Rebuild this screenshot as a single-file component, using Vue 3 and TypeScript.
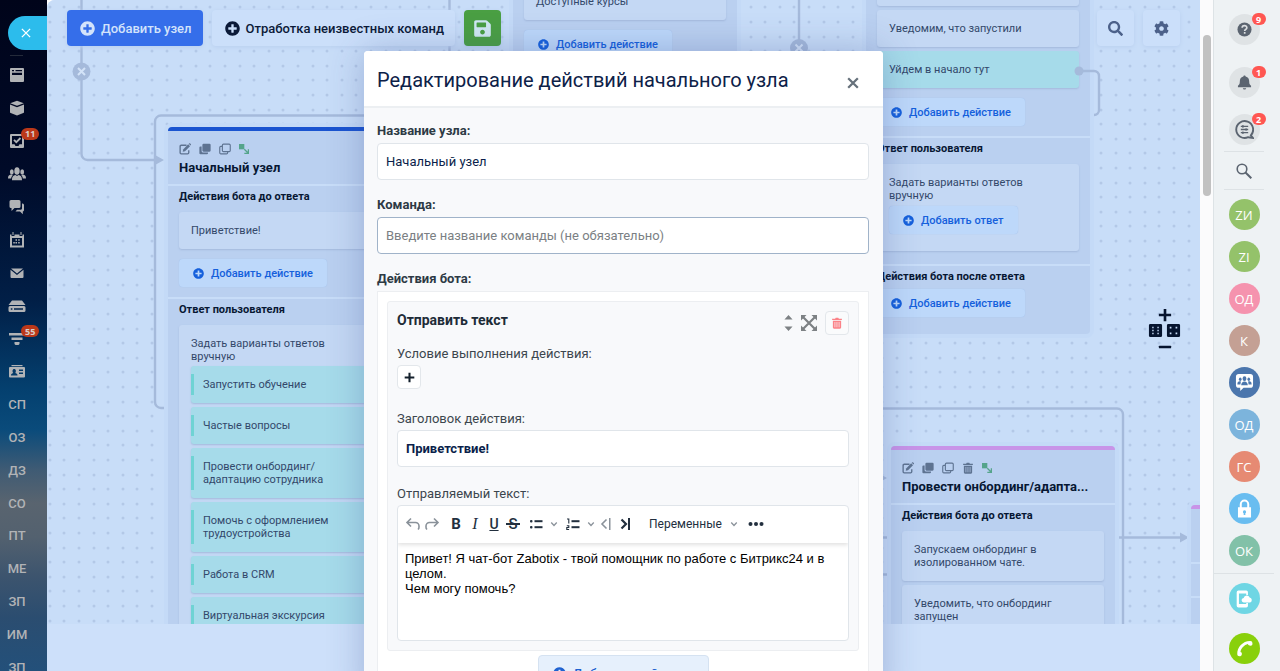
<script setup lang="ts">
import { h, ref } from 'vue'

interface Glyph { box: string; body: string }

const glyphs: Record<string, Glyph> = {
  plusCircle: { box: '0 0 512 512', body: '<path d="M256 8C119 8 8 119 8 256s111 248 248 248 248-111 248-248S393 8 256 8zm144 276c0 6.6-5.4 12-12 12h-92v92c0 6.6-5.4 12-12 12h-56c-6.600 0-12-5.400-12-12v-92h-92c-6.600 0-12-5.400-12-12v-56c0-6.600 5.400-12 12-12h92v-92c0-6.600 5.400-12 12-12h56c6.600 0 12 5.400 12 12v92h92c6.600 0 12 5.400 12 12v56z"/>' },
  search: { box: '0 0 512 512', body: '<path d="M505 442.7L405.3 343c-4.500-4.500-10.600-7-17-7H372c27.600-35.300 44-79.700 44-128C416 93.100 322.900 0 208 0S0 93.100 0 208s93.100 208 208 208c48.300 0 92.700-16.400 128-44v16.300c0 6.400 2.500 12.500 7 17l99.700 99.700c9.400 9.400 24.600 9.400 33.900 0l28.300-28.300c9.400-9.400 9.400-24.600.1-34zM208 336c-70.700 0-128-57.200-128-128 0-70.700 57.200-128 128-128 70.700 0 128 57.200 128 128 0 70.700-57.200 128-128 128z"/>' },
  gear: { box: '0 0 512 512', body: '<path d="M487.4 315.7l-42.600-24.600c4.300-23.200 4.300-47 0-70.200l42.600-24.600c4.900-2.800 7.100-8.600 5.500-14-11.100-35.600-30-67.800-54.700-94.600-3.800-4.100-10-5.100-14.800-2.300L380.800 110c-17.900-15.400-38.500-27.300-60.800-35.100V25.800c0-5.600-3.900-10.500-9.400-11.700-36.700-8.200-74.300-7.800-109.200 0-5.500 1.200-9.400 6.100-9.400 11.700V75c-22.200 7.900-42.800 19.800-60.800 35.100L88.700 85.500c-4.900-2.800-11-1.900-14.800 2.300-24.700 26.700-43.600 58.900-54.700 94.600-1.700 5.400.6 11.200 5.500 14L67.300 221c-4.300 23.200-4.300 47 0 70.200l-42.600 24.600c-4.900 2.800-7.100 8.600-5.500 14 11.100 35.600 30 67.800 54.700 94.600 3.800 4.100 10 5.100 14.800 2.300l42.600-24.600c17.900 15.400 38.500 27.300 60.800 35.100v49.200c0 5.600 3.900 10.500 9.400 11.700 36.700 8.200 74.300 7.800 109.200 0 5.500-1.200 9.400-6.100 9.400-11.700v-49.200c22.200-7.900 42.800-19.800 60.800-35.100l42.600 24.600c4.900 2.800 11 1.900 14.800-2.300 24.700-26.700 43.600-58.900 54.700-94.600 1.500-5.500-.7-11.300-5.600-14.100zM256 336c-44.100 0-80-35.900-80-80s35.900-80 80-80 80 35.900 80 80-35.900 80-80 80z"/>' },
  save: { box: '0 0 448 512', body: '<path d="M433.900 129.900l-83.900-83.900A48 48 0 0 0 316.100 32H48C21.500 32 0 53.500 0 80v352c0 26.500 21.500 48 48 48h352c26.500 0 48-21.500 48-48V163.900a48 48 0 0 0-14.100-34zM224 416c-35.300 0-64-28.700-64-64s28.700-64 64-64 64 28.700 64 64-28.700 64-64 64zm96-304.500V212c0 6.600-5.400 12-12 12H76c-6.600 0-12-5.400-12-12V108c0-6.600 5.400-12 12-12h228.500c3.200 0 6.200 1.300 8.500 3.500l3.500 3.500a12 12 0 0 1 3.500 8.500z"/>' },
  edit: { box: '0 0 16 16', body: '<path d="M10 3H3a1.500 1.500 0 0 0-1.500 1.500v8.500A1.500 1.500 0 0 0 3 14.500h8.500A1.500 1.500 0 0 0 13 13V9.500" fill="none" stroke="currentColor" stroke-width="1.800"/><path d="M5 11.500l.5-3L12.200 1.800 14.700 4.300 8 11z"/><path d="M13 1l.8-.6c.4-.3.8-.2 1.100.1l.8.8c.4.4.4.8.1 1.200l-.6.8z"/>' },
  copySolid: { box: '0 0 16 16', body: '<rect x="4.500" y="1" width="11" height="10.500" rx="1.500"/><path d="M3.500 4.500H2A1.500 1.500 0 0 0 .5 6v7.500A1.500 1.500 0 0 0 2 15h8.500a1.500 1.500 0 0 0 1.500-1.500v-1H5a1.500 1.500 0 0 1-1.500-1.500z"/>' },
  copy: { box: '0 0 16 16', body: '<g fill="none" stroke="currentColor" stroke-width="1.500"><rect x="4.500" y="1.500" width="10.500" height="10" rx="1.500"/><path d="M4 4.500H2.500A1.500 1.500 0 0 0 1 6v7A1.500 1.500 0 0 0 2.500 14.500H10a1.500 1.500 0 0 0 1.500-1.500v-1"/></g>' },
  trash: { box: '0 0 16 16', body: '<path fill-rule="evenodd" d="M1.500 2.200H5.500L6.300 1h3.400l.8 1.200h4v1.800h-13zM2.500 5h11v9a1.500 1.500 0 0 1-1.500 1.500H4A1.500 1.500 0 0 1 2.500 14zM4.800 6.500v7h.9v-7zM7.500 6.500v7h.9v-7zM10.300 6.500v7h.9v-7z"/>' },
  link: { box: '0 0 16 16', body: '<rect x="0" y="0" width="8.500" height="8.500"/><path d="M8.500 8.500l6 6M15 8.500V15H8.500" fill="none" stroke="currentColor" stroke-width="2"/>' },
  crossThin: { box: '0 0 16 16', body: '<path d="M2.500 2.500l11 11M13.500 2.500l-11 11" fill="none" stroke="currentColor" stroke-width="1.800"/>' },
  crossBold: { box: '0 0 16 16', body: '<path d="M2.500 2.500l11 11M13.500 2.500l-11 11" fill="none" stroke="currentColor" stroke-width="2.600"/>' },
  plus: { box: '0 0 16 16', body: '<path d="M6.500 1h3v5.500H15v3H9.500V15h-3V9.500H1v-3h5.500z"/>' },
  minus: { box: '0 0 16 16', body: '<rect x="1" y="6.500" width="14" height="3" rx=".6"/>' },
  diceSix: { box: '0 0 16 16', body: '<path fill-rule="evenodd" d="M2.500 1h11A1.500 1.500 0 0 1 15 2.500v11a1.500 1.500 0 0 1-1.500 1.500h-11A1.500 1.500 0 0 1 1 13.500v-11A1.500 1.500 0 0 1 2.500 1zM4.500 4v1.500H6V4zM10 4v1.500h1.500V4zM4.500 7.200v1.500H6V7.200zM10 7.200v1.500h1.500V7.200zM4.500 10.500V12H6v-1.500zM10 10.500V12h1.500v-1.500z"/>' },
  diceFour: { box: '0 0 16 16', body: '<path fill-rule="evenodd" d="M2.500 1h11A1.500 1.500 0 0 1 15 2.500v11a1.500 1.500 0 0 1-1.500 1.500h-11A1.500 1.500 0 0 1 1 13.500v-11A1.500 1.500 0 0 1 2.500 1zM4 4v1.800h1.800V4zM10.200 4v1.800H12V4zM4 10.200V12h1.800v-1.800zM10.200 10.200V12H12v-1.800z"/>' },
  sort: { box: '0 0 10 20', body: '<path d="M.5 6L5 1l4.500 5zM.5 14L5 19l4.500-5z"/>' },
  expand: { box: '0 0 16 16', body: '<path d="M0 0h5.500L0 5.500zM16 0h-5.500L16 5.500zM0 16h5.500L0 10.500zM16 16h-5.500L16 10.500z"/><path d="M2 2l12 12M14 2L2 14" stroke="currentColor" stroke-width="2.200"/>' },
  undo: { box: '0 0 16 16', body: '<path d="M6 2.500L2 6.500l4 4M2.500 6.500h8a3.500 3.500 0 0 1 3.500 3.500v1a3 3 0 0 1-1 2.500" fill="none" stroke="currentColor" stroke-width="1.600"/>' },
  redo: { box: '0 0 16 16', body: '<path d="M10 2.500l4 4-4 4M13.500 6.500h-8A3.500 3.500 0 0 0 2 10v1a3 3 0 0 0 1 2.500" fill="none" stroke="currentColor" stroke-width="1.600"/>' },
  bullets: { box: '0 0 16 16', body: '<rect x="2" y="4" width="2.500" height="2.500" rx="1"/><rect x="2" y="10" width="2.500" height="2.500" rx="1"/><rect x="6.500" y="4.200" width="8" height="2"/><rect x="6.500" y="10.200" width="8" height="2"/>' },
  numbers: { box: '0 0 16 16', body: '<path d="M2 3h1.800v4.500M1.800 9.800h2v1.700h-2v2h2.300" fill="none" stroke="currentColor" stroke-width="1.100"/><rect x="6.500" y="4.200" width="8" height="2"/><rect x="6.500" y="10.200" width="8" height="2"/>' },
  chevron: { box: '0 0 16 16', body: '<path d="M2.500 5l5.500 6 5.500-6" fill="none" stroke="currentColor" stroke-width="2.600"/>' },
  before: { box: '0 0 16 16', body: '<path d="M8.500 3.500L4 8l4.500 4.500" fill="none" stroke="currentColor" stroke-width="1.600"/><rect x="11" y="2" width="1.500" height="12"/>' },
  after: { box: '0 0 16 16', body: '<path d="M4.500 3.500L9 8l-4.500 4.500" fill="none" stroke="currentColor" stroke-width="2.200"/><rect x="11" y="2" width="2" height="12"/>' },
  dots: { box: '0 0 16 16', body: '<circle cx="2.500" cy="8" r="2"/><circle cx="8" cy="8" r="2"/><circle cx="13.500" cy="8" r="2"/>' },
  feed: { box: '0 0 16 16', body: '<path fill-rule="evenodd" d="M2 1h12a1 1 0 0 1 1 1v12a1 1 0 0 1-1 1H2a1 1 0 0 1-1-1V2a1 1 0 0 1 1-1zM3 3v1.300h2V3zM6.500 3v1.300H13V3zM3 5.800V8h10V5.800z"/>' },
  box: { box: '0 0 16 16', body: '<path d="M8 .8L14.800 3.300 8 5.800 1.200 3.300zM1 4.600L8 7.200l7-2.600v7.600a1 1 0 0 1-.7.900L8 15.400l-6.300-2.300a1 1 0 0 1-.7-.9z"/>' },
  task: { box: '0 0 16 16', body: '<path fill-rule="evenodd" d="M2 1h12a1 1 0 0 1 1 1v12a1 1 0 0 1-1 1H2a1 1 0 0 1-1-1V2a1 1 0 0 1 1-1zM3 3v8.200h2.500L6.500 13h3l1-1.800H13V3z"/><path d="M5 6.800l2.300 2.400L11.500 5" fill="none" stroke="currentColor" stroke-width="1.800"/>' },
  people: { box: '0 0 18 16', body: '<ellipse cx="9" cy="5" rx="2.700" ry="3.800"/><path d="M4 14.200c0-3.500 1-4.500 3.500-5.200L9 10l1.500-1C13 9.700 14 10.700 14 14.200z"/><ellipse cx="3.800" cy="6" rx="1.900" ry="2.700"/><ellipse cx="14.200" cy="6" rx="1.900" ry="2.700"/><path d="M0 12.500C0 10 .8 9.300 3 8.600l1.700.6C3.500 10.500 3.200 11.500 3.200 12.500zM18 12.500c0-2.500-.8-3.200-3-3.900l-1.700.6c1.200 1.300 1.500 2.300 1.500 3.300z"/>' },
  chat: { box: '0 0 16 16', body: '<path d="M2 1h8a1.500 1.500 0 0 1 1.500 1.500v5A1.500 1.500 0 0 1 10 9H5.500l-3 3V9H2A1.500 1.500 0 0 1 .5 7.500v-5A1.500 1.500 0 0 1 2 1z"/><path d="M13 4.500h.5A1.500 1.500 0 0 1 15 6v5a1.500 1.500 0 0 1-1.200 1.500v2.700L11 12.500H6.500L8 10.800h3.500A1.500 1.500 0 0 0 13 9.500z"/>' },
  calendar: { box: '0 0 16 16', body: '<path fill-rule="evenodd" d="M1 2.500h1.500V4h3V2.500h5V4h3V2.500H15v13H1zM3 6v7.500h10V6z"/><path d="M3.500 0h1v3h-1zM11.500 0h1v3h-1zM6.500 7.200h1.500v1.500H6.500zM9.200 7.200h1.500v1.500H9.200zM4.300 10h1.500v1.500H4.300zM6.500 10H8v1.500H6.500zM9.200 10h1.500v1.500H9.200z"/>' },
  mail: { box: '0 0 16 16', body: '<path d="M2 3.500h12L8 8.500zM1.500 4.700L8 10l6.500-5.300V12a1 1 0 0 1-1 1h-11a1 1 0 0 1-1-1z"/>' },
  drive: { box: '0 0 18 16', body: '<path fill-rule="evenodd" d="M4 2.500h10L17.500 7H.5zM2 8h14a1.500 1.500 0 0 1 1.500 1.500v3A1.500 1.500 0 0 1 16 14H2a1.500 1.500 0 0 1-1.500-1.500v-3A1.500 1.500 0 0 1 2 8zM2.800 10.200v1.600h1.600v-1.600zM6 10.200v1.600h9v-1.600z"/>' },
  filter: { box: '0 0 16 16', body: '<rect y="2" width="16" height="2.500"/><rect x="2.500" y="6.500" width="11" height="2.500"/><path d="M5.500 11h5v2L9.500 14h-3l-1-1z"/>' },
  card: { box: '0 0 18 16', body: '<path fill-rule="evenodd" d="M2 4h14a1 1 0 0 1 1 1v8.500a1 1 0 0 1-1 1H2a1 1 0 0 1-1-1V5a1 1 0 0 1 1-1zM11 6.500V8h4V6.500zM11 9.500V11h4V9.500zM3 12.500h6.500C9.500 11 9 10.700 7.300 10 8.200 8.800 8.200 6 6.200 6S4.200 8.800 5.200 10c-1.700.7-2.200 1-2.200 2.500z"/><path d="M3.500 2h11v1.200h-11z"/>' },
  help: { box: '0 0 16 16', body: '<circle cx="8" cy="8" r="7.500"/><path d="M5.500 6.200C5.500 3 10.500 3 10.500 6c0 1.800-2.300 1.900-2.300 3.600M8.200 10.700v1.800" fill="none" stroke="#dcdfe2" stroke-width="1.800"/>' },
  bell: { box: '0 0 16 16', body: '<path d="M8 .5c.8 0 1.200.5 1.200 1.200C12 2.300 13 4.500 13 7c0 3 .8 3.500 2 4.500V13H1v-1.500c1.200-1 2-1.500 2-4.500 0-2.500 1-4.700 3.800-5.300C6.800 1 7.200.5 8 .5zM6.200 14h3.600a1.800 1.500 0 0 1-3.600 0z"/>' },
  chatRound: { box: '0 0 18 18', body: '<path d="M15 14.500A8 8 0 1 0 12.500 16.300L17 17z" fill="none" stroke="currentColor" stroke-width="1.800"/><path d="M5.500 6h7M5.500 9h7M5.500 12h7M7.500 4.800v2.500M10.500 7.800v2.500M7.500 10.800v2.500" fill="none" stroke="currentColor" stroke-width="1.200"/>' },
  lens: { box: '0 0 16 16', body: '<circle cx="6" cy="6" r="4.800" fill="none" stroke="currentColor" stroke-width="1.600"/><path d="M9.500 9.500l5.800 5.800" stroke="currentColor" stroke-width="2"/>' },
  group: { box: '0 0 20 20', body: '<path d="M4 1h12a3 3 0 0 1 3 3v8.500a3 3 0 0 1-3 3H9L5.500 19v-3.500H4a3 3 0 0 1-3-3V4a3 3 0 0 1 3-3z"/><g fill="#4b76ad"><ellipse cx="10" cy="6" rx="2" ry="2.500"/><ellipse cx="5.500" cy="6.500" rx="1.400" ry="1.800"/><ellipse cx="14.500" cy="6.500" rx="1.400" ry="1.800"/><path d="M6.500 13c0-5.500 7-5.500 7 0zM2.500 12c0-3.500 2-3.500 3.700-3L5.700 12zM17.500 12c0-3.500-2-3.500-3.700-3l.5 3z"/></g>' },
  lock: { box: '0 0 16 16', body: '<path fill-rule="evenodd" d="M4 7V4.500a4 4 0 0 1 8 0V7h1.500v8.500h-11V7zM5.700 7h4.600V4.500a2.300 2.300 0 0 0-4.600 0zM8 9.500a1.300 1.300 0 0 0-.7 2.400v1.600h1.400v-1.600A1.300 1.300 0 0 0 8 9.500z"/>' },
  mobile: { box: '0 0 16 16', body: '<path fill-rule="evenodd" d="M3 .5h7A1.500 1.500 0 0 1 11.500 2v2.500H10V3H3.500v9.500H10V11.500h1.500V14a1.500 1.500 0 0 1-1.500 1.500H3A1.500 1.500 0 0 1 1.500 14V2A1.500 1.500 0 0 1 3 .5z"/><path d="M8 11a2 2 0 0 1-.3-4A2.800 2.800 0 0 1 13 6.600 2.300 2.300 0 0 1 13.500 11z"/>' },
  phone: { box: '0 0 16 16', body: '<path d="M1.200 13.500C.8 7 6.500.8 13.500 1c1.500.1 2 1.200 2 2.600 0 1.200-.6 1.800-1.700 1.800-1.500 0-2.300-.6-2.600-1.600C7.800 4.500 4.700 8 4.200 11.200c1.100.2 1.500 1 1.300 2.200-.2 1.400-1 1.900-2.200 1.900-1.400 0-2-.6-2.100-1.800z"/>' },
}

const Icon = (p: { name: string; size: number }) => {
  const g = glyphs[p.name]
  const [, , w, ht] = g.box.split(' ').map(Number)
  return h('svg', {
    viewBox: g.box,
    width: Math.round((p.size * w) / ht),
    height: p.size,
    fill: 'currentColor',
    'aria-hidden': 'true',
    innerHTML: g.body,
  })
}
Icon.props = ['name', 'size']

interface Block { text: string; go?: boolean }
interface Section { title: string; blocks?: Block[]; answers?: string[]; choice?: boolean; add?: boolean }
interface BoardNode { x: number; y: number; tone: string; title: string; tools: string[]; sections: Section[] }

const full = ['edit', 'copySolid', 'copy', 'trash', 'link']
const before = 'Действия бота до ответа'
const nodes: BoardNode[] = [
  {
    x: 121, y: 127, tone: 'blue', title: 'Начальный узел', tools: ['edit', 'copySolid', 'copy', 'link'],
    sections: [
      { title: before, blocks: [{ text: 'Приветствие!' }], add: true },
      { title: 'Ответ пользователя', choice: true, answers: ['Запустить обучение', 'Частые вопросы', 'Провести онбординг/ адаптацию сотрудника', 'Помочь с оформлением трудоустройства', 'Работа в CRM', 'Виртуальная экскурсия'] },
    ],
  },
  { x: 466, y: -102, tone: 'violet', title: '', tools: [], sections: [{ title: '', blocks: [{ text: 'Доступные курсы' }], add: true }] },
  {
    x: 819, y: -116, tone: 'violet', title: '', tools: [],
    sections: [
      { title: '', blocks: [{ text: '' }, { text: 'Уведомим, что запустили' }, { text: 'Уйдем в начало тут', go: true }], add: true },
      { title: 'Ответ пользователя', choice: true },
      { title: 'Действия бота после ответа', add: true },
    ],
  },
  {
    x: 844, y: 446, tone: 'violet', title: 'Провести онбординг/адапта...', tools: full,
    sections: [{ title: before, blocks: [{ text: 'Запускаем онбординг в изолированном чате.' }, { text: 'Уведомить, что онбординг запущен' }] }],
  },
  { x: 1144, y: 505, tone: 'violet', title: '', tools: [], sections: [{ title: '' }, { title: '' }, { title: '' }] },
]

const dotX = [3, 17, 32, 47, 61]
const dotY = [7, 22, 37, 51, 66]

interface RailItem { icon?: string; text?: string; badge?: string }
const rail: RailItem[] = [
  { icon: 'feed' }, { icon: 'box' }, { icon: 'task', badge: '11' }, { icon: 'people' }, { icon: 'chat' }, { icon: 'calendar' },
  { icon: 'mail' }, { icon: 'drive' }, { icon: 'filter', badge: '55' }, { icon: 'card' },
  ...['СП', 'ОЗ', 'ДЗ', 'СО', 'ПТ', 'МЕ', 'ЗП', 'ИМ', 'ЗП'].map((text) => ({ text })),
]

const contacts = [
  { text: 'ZИ', tone: 'green' }, { text: 'ZI', tone: 'green' }, { text: 'ОД', tone: 'pink' }, { text: 'К', tone: 'brown' },
  { icon: 'group', tone: 'navy' }, { text: 'ОД', tone: 'sky' }, { text: 'ГС', tone: 'coral' }, { icon: 'lock', tone: 'azure' }, { text: 'ОК', tone: 'mint' },
]

const nodeName = ref('Начальный узел')
const command = ref('')
const actionTitle = ref('Приветствие!')
const message = ref('Привет! Я чат-бот Zabotix - твой помощник по работе с Битрикс24 и в целом.\nЧем могу помочь?')
</script>

<template>
  <div class="app">
    <nav class="rail">
      <button class="rail-close" aria-label="Закрыть"><Icon name="crossThin" :size="12" /></button>
      <hr class="rail-line" />
      <ul class="rail-list">
        <li v-for="(item, i) in rail" :key="i">
          <a href="#" class="rail-link">
            <Icon v-if="item.icon" :name="item.icon" :size="16" />
            <span v-else>{{ item.text }}</span>
            <b v-if="item.badge" class="badge rail-badge">{{ item.badge }}</b>
          </a>
        </li>
      </ul>
    </nav>

    <main class="stage">
      <div class="board">
        <svg class="wires" width="100%" height="100%">
          <defs>
            <pattern id="grid-dots" width="73" height="73" patternUnits="userSpaceOnUse">
              <template v-for="x in dotX" :key="x">
                <circle v-for="y in dotY" :key="y" :cx="x" :cy="y" r="1.500" fill="#b3c8e7" />
              </template>
            </pattern>
          </defs>
          <rect width="100%" height="100%" fill="url(#grid-dots)" />
          <g fill="none" stroke="#a5badb" stroke-width="2.400">
            <path d="M34.500 0V154a6 6 0 0 0 6 6H112" />
            <path d="M330 115.500H114a6 6 0 0 0-6 6V402a6 6 0 0 0 6 6h8" />
            <path d="M402.500 0V60M752 0V60" />
            <path d="M800 408.500H1070a6 6 0 0 1 6 6V640" />
            <path d="M1072 537.500H1134M800 537.500H840M800 574.500H840" />
          </g>
          <g fill="#a5badb">
            <path d="M108 155l9 5-9 5zM1133 532.500l9 5-9 5zM831 473l9 5-9 5z" />
            <circle cx="34.500" cy="71.500" r="9" />
            <circle cx="752" cy="48" r="9" />
          </g>
          <path d="M31 68l7 7M38 68l-7 7M748.500 44.500l7 7M755.500 44.500l-7 7" stroke="#d3e3f8" stroke-width="2" />
        </svg>

        <article v-for="(node, i) in nodes" :key="i" class="node" :class="node.tone" :style="{ left: node.x + 'px', top: node.y + 'px' }">
          <header class="node-head">
            <div class="node-tools">
              <button v-for="t in node.tools" :key="t" :class="{ link: t === 'link' }" :aria-label="t"><Icon :name="t" :size="12" /></button>
            </div>
            <h3>{{ node.title }}</h3>
          </header>
          <section v-for="(s, k) in node.sections" :key="k" class="node-section">
            <h4>{{ s.title }}</h4>
            <div v-for="b in s.blocks" :key="b.text" class="block" :class="{ go: b.go }">{{ b.text }}</div>
            <div v-if="s.choice" class="block choice">
              <p>Задать варианты ответов вручную</p>
              <div v-for="a in s.answers" :key="a" class="answer">{{ a }}</div>
              <button v-if="!s.answers" class="add small"><Icon name="plusCircle" :size="11" />Добавить ответ</button>
            </div>
            <button v-if="s.add" class="add"><Icon name="plusCircle" :size="11" />Добавить действие</button>
          </section>
        </article>

        <svg class="wires" width="100%" height="100%">
          <path d="M1032 71h15a5 5 0 0 1 5 5v34a5 5 0 0 1-5 5" fill="none" stroke="#a5badb" stroke-width="2.400" />
          <circle cx="1032" cy="71" r="4.500" fill="#a5badb" />
        </svg>
      </div>

      <div class="toolbar">
        <button class="tool primary"><Icon name="plusCircle" :size="15" />Добавить узел</button>
        <button class="tool plain"><Icon name="plusCircle" :size="15" />Отработка неизвестных команд</button>
        <button class="tool square save" aria-label="Сохранить"><Icon name="save" :size="19" /></button>
        <span class="spacer"></span>
        <button class="tool square" aria-label="Поиск"><Icon name="search" :size="15" /></button>
        <button class="tool square" aria-label="Настройки"><Icon name="gear" :size="15" /></button>
      </div>

      <div class="zoomer">
        <button aria-label="Увеличить"><Icon name="plus" :size="14" /></button>
        <button aria-label="Масштаб"><Icon name="diceSix" :size="15" /><Icon name="diceFour" :size="15" /></button>
        <button aria-label="Уменьшить"><Icon name="minus" :size="14" /></button>
      </div>

      <div class="overlay">
        <form class="modal" @submit.prevent>
          <header class="modal-head">
            <h2>Редактирование действий начального узла</h2>
            <button type="button" class="modal-close" aria-label="Закрыть"><Icon name="crossBold" :size="14" /></button>
          </header>
          <div class="modal-body">
            <label for="node-name">Название узла:</label>
            <input id="node-name" v-model="nodeName" class="field" type="text" />
            <label for="node-command">Команда:</label>
            <input id="node-command" v-model="command" class="field focus" type="text" placeholder="Введите название команды (не обязательно)" />
            <p class="caption">Действия бота:</p>
            <div class="actions">
              <div class="action">
                <div class="action-head">
                  <h3>Отправить текст</h3>
                  <div class="action-tools">
                    <button type="button" class="bare" aria-label="Порядок"><Icon name="sort" :size="18" /></button>
                    <button type="button" class="bare" aria-label="Развернуть"><Icon name="expand" :size="16" /></button>
                    <button type="button" class="mini danger" aria-label="Удалить"><Icon name="trash" :size="12" /></button>
                  </div>
                </div>
                <p class="light">Условие выполнения действия:</p>
                <button type="button" class="mini" aria-label="Добавить условие"><Icon name="plus" :size="11" /></button>
                <label for="action-title" class="light spaced">Заголовок действия:</label>
                <input id="action-title" v-model="actionTitle" class="field strong" type="text" />
                <label for="action-text" class="light">Отправляемый текст:</label>
                <div class="editor">
                  <div class="editor-bar">
                    <button type="button" class="dim" aria-label="Отменить"><Icon name="undo" :size="16" /></button>
                    <button type="button" class="dim" aria-label="Повторить"><Icon name="redo" :size="16" /></button>
                    <button type="button" class="letter bold">B</button>
                    <button type="button" class="letter italic">I</button>
                    <button type="button" class="letter under">U</button>
                    <button type="button" class="letter strike">S</button>
                    <button type="button" class="menu" aria-label="Маркированный список"><Icon name="bullets" :size="16" /><Icon class="chev" name="chevron" :size="8" /></button>
                    <button type="button" class="menu" aria-label="Нумерованный список"><Icon name="numbers" :size="16" /><Icon class="chev" name="chevron" :size="8" /></button>
                    <button type="button" class="dim" aria-label="Перед"><Icon name="before" :size="16" /></button>
                    <button type="button" aria-label="После"><Icon name="after" :size="16" /></button>
                    <button type="button" class="vars">Переменные<Icon class="chev" name="chevron" :size="8" /></button>
                    <button type="button" aria-label="Ещё"><Icon name="dots" :size="16" /></button>
                  </div>
                  <textarea id="action-text" v-model="message" rows="5"></textarea>
                </div>
              </div>
              <button type="button" class="add-action"><Icon name="plusCircle" :size="13" />Добавить действие</button>
            </div>
          </div>
        </form>
      </div>
    </main>

    <div class="scroll"><span class="thumb"></span></div>

    <aside class="side">
      <button class="round" aria-label="Помощь"><Icon name="help" :size="15" /><b class="badge">9</b></button>
      <button class="round" aria-label="Уведомления"><Icon name="bell" :size="15" /><b class="badge">1</b></button>
      <button class="round" aria-label="Сообщения"><Icon name="chatRound" :size="19" /><b class="badge">2</b></button>
      <button class="side-search" aria-label="Найти"><Icon name="lens" :size="16" /></button>
      <div class="contacts">
        <button v-for="(c, i) in contacts" :key="i" class="avatar" :class="c.tone" :aria-label="c.text || c.icon">
          <Icon v-if="c.icon" :name="c.icon" :size="19" /><template v-else>{{ c.text }}</template>
        </button>
      </div>
      <button class="avatar cyan" aria-label="Мобильное приложение"><Icon name="mobile" :size="18" /></button>
      <button class="avatar lime" aria-label="Телефон"><Icon name="phone" :size="17" /></button>
    </aside>
  </div>
</template>

<style>
body { margin: 0; overflow: hidden; }
</style>

<style scoped>
.app { display: flex; height: 100vh; overflow: hidden; font-family: Roboto, "Liberation Sans", sans-serif; font-size: 13px; color: #10203f; }
.app * { box-sizing: border-box; }
.app svg { display: block; flex: none; }
button { display: flex; align-items: center; justify-content: center; margin: 0; padding: 0; border: 0; background: none; color: inherit; font: inherit; }
h2, h3, h4, p, ul { margin: 0; padding: 0; list-style: none; }

.rail { flex: 0 0 47px; display: flex; flex-direction: column; padding-top: 16px; overflow: hidden; background: linear-gradient(180deg, #00041a 0%, #000a28 25%, #011f47 45%, #04406f 58%, #0a4b7b 64%, #3f5b74 70%, #59646f 75%, #53616f 80%, #3c546e 86%, #2b4d70 92%, #23507a 100%); color: #b1b3b6; }
.rail-close { flex: 0 0 34px; margin-left: 8px; border-radius: 17px 0 0 17px; background: #2cbcec; color: #fff; padding-right: 3px; }
.rail-line { width: 13px; height: 1px; margin: 5px 0 0 10px; border: 0; background: #242a3a; }
.rail-list { flex: 1; display: flex; flex-direction: column; margin: 3px 0 -13px; }
.rail-list li { flex: 1; }
.rail-link { position: relative; display: flex; align-items: center; justify-content: center; width: 34px; height: 100%; color: inherit; font-size: 13px; font-weight: 500; text-decoration: none; }
.badge { position: absolute; display: flex; align-items: center; justify-content: center; min-width: 14px; height: 12px; padding: 0 4px; border-radius: 6px; background: #ff5752; color: #fff; font-family: "Open Sans", sans-serif; font-size: 9px; font-weight: 700; }
.rail-badge { left: 21px; top: 3px; background: #bb3819; color: #d9cfcc; }

.stage { position: relative; flex: 1; min-width: 0; overflow: hidden; background: #cde0fa; border-radius: 8px 0 0 0; }
.board { position: absolute; inset: 0 0 47px; overflow: hidden; background: #c8ddf8; }
.wires { position: absolute; inset: 0; }
.node { position: absolute; width: 224px; padding-bottom: 17px; border-radius: 4px; background: #bad0f0; box-shadow: 0 0 0 4px #c4daf7; }
.node-head { height: 57px; padding: 11px 11px 0; border-top: 4px solid #c894e8; border-radius: 4px 4px 0 0; }
.blue .node-head { border-top-color: #1a54d0; }
.node-tools { display: flex; gap: 8px; height: 14px; color: #5e7391; }
.node-tools .link { color: #55a48b; }
.node-tools .link svg { width: 10px; }
.node-head h3 { overflow: hidden; white-space: nowrap; text-overflow: ellipsis; color: #071733; font-size: 13px; font-weight: 700; line-height: 16px; padding-top: 4px; }
.node-section { padding: 0 11px; border-top: 2px solid #c8ddf8; }
.node-section:not(:last-child) { padding-bottom: 10px; }
.node-section h4 { height: 22px; color: #071733; font-size: 11px; font-weight: 700; line-height: 22px; }
.block { min-height: 37px; margin-top: 4px; padding: 12px; border-radius: 3px; background: #c4d8f4; box-shadow: 0 1px 2px #a3b9dc; color: #33486a; font-size: 11px; line-height: 13px; }
.go { background: #a6dbea; }
.choice { padding-bottom: 17px; margin-bottom: 3px; }
.answer { min-height: 37px; margin: 4px -12px 0 0; padding: 12px 30px 12px 12px; border-radius: 3px 0 0 3px; background: linear-gradient(#6fd3d4, #6fd3d4) 0 50% / 3px calc(100% - 16px) no-repeat #a6dbea; box-shadow: 0 1px 2px #a3b9dc; }
p + .answer { margin-top: 3px; }
.add { gap: 7px; height: 28px; margin-top: 1px; padding: 0 14px; border-radius: 4px; background: #bdd8fa; box-shadow: 0 0 1px #9dbde8; color: #1560dc; font-size: 11px; font-weight: 500; }
.block + .add { margin-top: 10px; }
.add.small { margin-top: 4px; }

.toolbar { position: absolute; left: 20px; right: 20px; top: 10px; display: flex; gap: 9px; }
.tool { gap: 6px; height: 36px; padding: 0 11px 0 13px; border-radius: 4px; background: #cbdffa; box-shadow: 0 1px 4px #b9cfef; color: #4c618a; font-size: 13px; font-weight: 500; white-space: nowrap; }
.primary { background: #356eea; color: #d3e3fb; }
.plain { color: #0b1a38; }
.square { flex: 0 0 37px; padding: 0; }
.save { background: #4a9f43; color: #d0e8f3; }
.spacer { flex: 1; }
.zoomer { position: absolute; right: 19px; top: 307px; display: flex; flex-direction: column; align-items: center; gap: 1px; color: #06142f; }
.zoomer button { gap: 3px; height: 15px; }

.overlay { position: absolute; inset: 0; display: flex; justify-content: center; align-items: flex-start; padding-top: 51px; }
.modal { flex: 0 1 519px; border-radius: 4px 4px 0 0; background: #f8f9fb; box-shadow: 0 0 36px rgba(50, 70, 140, .3); color: #2d3a45; }
.modal-head { display: flex; align-items: center; justify-content: space-between; height: 57px; padding: 3px 23px 0 13px; border-bottom: 2px solid #eceff2; border-radius: 4px 4px 0 0; background: #fff; }
.modal-head h2 { color: #0d2148; font-size: 20px; font-weight: 400; line-height: 28px; white-space: nowrap; }
.modal-close { color: #66717b; padding-top: 6px; }
.modal-body { padding: 15px 14px 0 13px; }
label, .caption { display: block; height: 20px; font-size: 13px; font-weight: 700; line-height: 16px; }
.field { display: block; width: 100%; height: 37px; margin-bottom: 17px; padding: 0 8px; border: 1px solid #e0e5ea; border-radius: 4px; background: #fff; color: #0b1f4b; font: 400 13px Roboto, sans-serif; }
.field.focus { border-color: #a0b3c9; }
.field::placeholder { color: #7b7f84; opacity: 1; }
.actions { padding: 9px; border: 1px solid #eceef1; background: #fff; }
.action { height: 350px; padding: 9px; border: 1px solid #eceef1; border-radius: 3px; background: #f8f9fb; }
.action-head { display: flex; justify-content: space-between; height: 32px; }
.action-head h3 { font-size: 13px; font-weight: 700; line-height: 18px; color: #1e2c38; font-size: 14px; }
.action-tools { display: flex; align-items: center; gap: 8px; height: 24px; }
.bare { color: #7d8184; }
.mini { width: 24px; height: 24px; border: 1px solid #e3e7eb; border-radius: 4px; background: #fff; color: #14202c; }
.danger { color: #fb8288; background: #fafbfc; }
.light { display: block; height: 22px; font-size: 13px; font-weight: 400; line-height: 21px; color: #3c464e; }
.spaced { margin-top: 19px; }
.strong { margin-bottom: 16px; font-weight: 700; }
.editor { border: 1px solid #e0e5ea; border-radius: 4px; background: #fff; overflow: hidden; }
.editor-bar { position: relative; display: flex; align-items: center; height: 37px; padding: 0 7px 2px; gap: 3px; box-shadow: 0 2px 4px rgba(0, 0, 0, .12); color: #222f3e; }
.letter { width: 16px; font-size: 15px; }
.bold { margin-left: 5px; font-weight: 700; }
.italic { font-family: "Liberation Serif", serif; font-style: italic; font-size: 16px; }
.under { text-decoration: underline; font-weight: 500; font-size: 14px; }
.strike { font-weight: 500; background: linear-gradient(#222f3e, #222f3e) 50% 50% / 14px 2px no-repeat; }
.dim, .chev { color: #8a929a; }
.menu { gap: 6px; margin-left: 4px; }
.vars { gap: 8px; margin: 0 7px 0 13px; font-size: 12px; }
textarea { display: block; width: 100%; height: 97px; padding: 8px 7px; border: 0; resize: none; background: none; color: #000; font: 13px/15px "Liberation Sans", sans-serif; }
.add-action { gap: 7px; width: 171px; height: 36px; margin: 4px auto 0; border: 1px solid #d5e2f1; border-radius: 4px; background: #e6f0fc; color: #1f62d0; font-size: 13px; font-weight: 500; }

.scroll { flex: 0 0 13px; padding: 35px 2px 0 3px; background: #fbfbfc; }
.thumb { display: block; height: 161px; border-radius: 4px; background: #c1c1c1; }

.side { flex: 0 0 67px; display: flex; flex-direction: column; align-items: center; padding: 14px 6px 0 0; border-left: 1px solid #dde3e6; background: #eef2f4; color: #5b6470; font-family: "Open Sans", sans-serif; }
.round { position: relative; flex: none; width: 31px; height: 31px; margin-bottom: 22px; border-radius: 50%; background: #dfe3e5; }
.round + .round + .round { margin: -6px 0 6px; }
.round .badge { left: 23px; top: -1px; }
.side-search { flex: 0 0 39px; width: 40px; border: solid #dde2e5; border-width: 1px 0; }
.contacts { display: flex; flex-direction: column; align-items: center; gap: 11px; width: 60px; padding: 9px 0 7px; border-bottom: 1px solid #dde2e5; }
.avatar { flex: none; width: 31px; height: 31px; border-radius: 50%; color: #fff; font-size: 13px; }
.green { background: #94c26a; }
.pink { background: #f593ae; }
.brown { background: #c4a094; }
.navy { background: #4b76ad; }
.sky { background: #7cb4dc; }
.coral { background: #e68a73; }
.azure { background: #69bdf0; }
.mint { background: #82c1a8; }
.cyan { margin: 9px 0 19px; background: #6fd6e4; }
.lime { background: #89d00b; }
</style>
